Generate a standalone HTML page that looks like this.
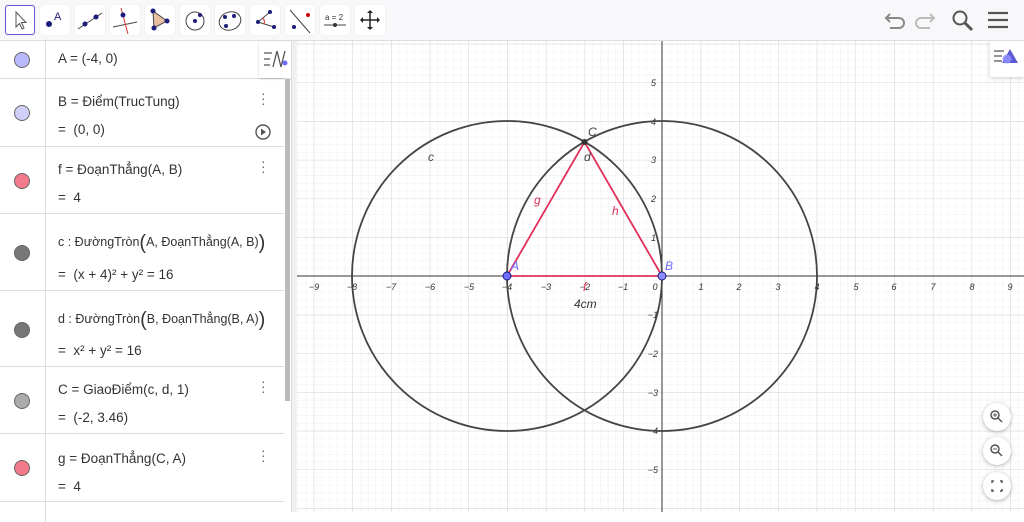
<!DOCTYPE html>
<html><head><meta charset="utf-8"><style>
body{margin:0;width:1024px;height:512px;overflow:hidden;background:#fff;font-family:"Liberation Sans","DejaVu Sans",sans-serif;position:relative}
.tb{position:absolute;left:0;top:0;width:1024px;height:40px;background:#f8f8fa;border-bottom:1px solid #ddd}
.tool{position:absolute;top:5px;width:30px;height:30px;background:#fff;border-radius:3px;box-shadow:0 0 1px #ccc}
.alg{position:absolute;left:0;top:41px;width:284px;height:471px;background:#fff}
.row{position:absolute;left:0;width:284px;border-bottom:1px solid #ddd;font-size:13.5px;color:#333}
.row .dot{position:absolute;left:14px;width:14px;height:14px;border-radius:50%;border:1px solid #666}
.row .col{position:absolute;left:45px;top:0;bottom:0;border-left:1px solid #ddd}
.row .t{position:absolute;left:58px;white-space:nowrap}
.menu{position:absolute;left:261px;font-size:14px;color:#666;line-height:5px;width:4px}
</style></head><body>
<div class="tb">
<div class="tool" style="left:5px;border:1.5px solid #6557d2;width:28px;height:28px"><svg width="28" height="28"><path d="M10 6 L10 21 L13.5 17.5 L16 23 L18 22 L15.5 16.5 L20 16.5 Z" fill="#fff" stroke="#555" stroke-width="1"/></svg></div>
<div class="tool" style="left:40px"><svg width="30" height="30"><circle cx="9" cy="19" r="3" fill="#1c1c7a"/><text x="14" y="15" font-size="11" fill="#1c1c7a">A</text></svg></div>
<div class="tool" style="left:75px"><svg width="30" height="30"><line x1="3" y1="24" x2="27" y2="8" stroke="#444"/><circle cx="10" cy="19" r="2.5" fill="#1c1c7a"/><circle cx="21" cy="12" r="2.5" fill="#1c1c7a"/></svg></div>
<div class="tool" style="left:110px"><svg width="30" height="30"><line x1="3" y1="22" x2="27" y2="17" stroke="#444"/><line x1="11" y1="3" x2="18" y2="29" stroke="#d33"/><circle cx="13" cy="10" r="2.5" fill="#1c1c7a"/></svg></div>
<div class="tool" style="left:145px"><svg width="30" height="30"><path d="M8 6 L9 23 L22 16Z" fill="#e8c0a0" stroke="#444"/><circle cx="8" cy="6" r="2.5" fill="#1c1c7a"/><circle cx="9" cy="23" r="2.5" fill="#1c1c7a"/><circle cx="22" cy="16" r="2.5" fill="#1c1c7a"/></svg></div>
<div class="tool" style="left:180px"><svg width="30" height="30"><circle cx="15" cy="16" r="9" fill="none" stroke="#444"/><circle cx="15" cy="16" r="2" fill="#1c1c7a"/><circle cx="20" cy="10" r="2" fill="#1c1c7a"/></svg></div>
<div class="tool" style="left:215px"><svg width="30" height="30"><ellipse cx="15" cy="16" rx="11" ry="9" fill="none" stroke="#444" transform="rotate(-20 15 16)"/><circle cx="10" cy="12" r="2" fill="#1c1c7a"/><circle cx="19" cy="11" r="2" fill="#1c1c7a"/><circle cx="11" cy="21" r="2" fill="#1c1c7a"/></svg></div>
<div class="tool" style="left:250px"><svg width="30" height="30"><path d="M20 7 L8 17 L24 22" fill="none" stroke="#444"/><path d="M13 13 A6 6 0 0 1 14 19" fill="#f5b0b0" stroke="#d33"/><circle cx="20" cy="7" r="2" fill="#1c1c7a"/><circle cx="8" cy="17" r="2" fill="#1c1c7a"/><circle cx="24" cy="22" r="2" fill="#1c1c7a"/></svg></div>
<div class="tool" style="left:285px"><svg width="30" height="30"><line x1="5" y1="5" x2="25" y2="28" stroke="#444"/><circle cx="23" cy="10" r="2" fill="#c00"/><circle cx="9" cy="22" r="2" fill="#1c1c7a"/></svg></div>
<div class="tool" style="left:320px"><svg width="30" height="30"><text x="5" y="15" font-size="8" fill="#333">a = 2</text><line x1="4" y1="20" x2="26" y2="20" stroke="#444"/><circle cx="15" cy="20" r="2" fill="#333"/></svg></div>
<div class="tool" style="left:355px"><svg width="30" height="30"><path d="M15 6 V24 M6 15 H24" stroke="#222" stroke-width="1.5"/><path d="M12 8 L15 5 L18 8Z M12 22 L15 25 L18 22Z M8 12 L5 15 L8 18Z M22 12 L25 15 L22 18Z" fill="#222"/></svg></div>
<svg style="position:absolute;left:880px;top:6px" width="144" height="30"><path d="M10 8 L6 12 L10 16 M6 12 H19 A5 5 0 0 1 19 22 H10" fill="none" stroke="#888" stroke-width="2"/><path d="M50 8 L54 12 L50 16 M54 12 H41 A5 5 0 0 0 41 22 H50" fill="none" stroke="#bbb" stroke-width="2"/><circle cx="80" cy="12" r="6.5" fill="none" stroke="#555" stroke-width="2"/><line x1="85" y1="17" x2="92" y2="24" stroke="#555" stroke-width="3"/><path d="M108 7 H128 M108 14 H128 M108 21 H128" stroke="#555" stroke-width="2.2"/></svg>
</div>

<svg style="position:absolute;left:0;top:41px" width="1024" height="471">
<defs>
<pattern id="mn" patternUnits="userSpaceOnUse" width="7.74" height="7.74" x="662" y="235"><path d="M0 0 H7.74 M0 0 V7.74" stroke="#efefef" stroke-width="1" fill="none"/></pattern>
<pattern id="mj" patternUnits="userSpaceOnUse" width="38.7" height="38.7" x="662" y="235"><path d="M0 0 H38.7 M0 0 V38.7" stroke="#d6d6d6" stroke-width="1" fill="none"/></pattern>
</defs>
<rect x="296" y="0" width="728" height="471" fill="url(#mn)"/>
<rect x="296" y="0" width="728" height="471" fill="url(#mj)"/>
<line x1="296" y1="235" x2="1024" y2="235" stroke="#333"/>
<line x1="662" y1="0" x2="662" y2="471" stroke="#333"/>
<g font-size="9" fill="#333" font-style="italic" text-anchor="middle">
<text x="314" y="249">−9</text><text x="352" y="249">−8</text><text x="391" y="249">−7</text><text x="430" y="249">−6</text><text x="469" y="249">−5</text><text x="507" y="249">−4</text><text x="546" y="249">−3</text><text x="585" y="249">−2</text><text x="623" y="249">−1</text><text x="655" y="249">0</text>
<text x="701" y="249">1</text><text x="739" y="249">2</text><text x="778" y="249">3</text><text x="817" y="249">4</text><text x="856" y="249">5</text><text x="894" y="249">6</text><text x="933" y="249">7</text><text x="972" y="249">8</text><text x="1010" y="249">9</text>
</g>
<g font-size="9" fill="#333" font-style="italic" text-anchor="end">
<text x="656" y="45">5</text><text x="656" y="84">4</text><text x="656" y="122">3</text><text x="656" y="161">2</text><text x="656" y="200">1</text>
<text x="658" y="277">−1</text><text x="658" y="316">−2</text><text x="658" y="355">−3</text><text x="658" y="393">−4</text><text x="658" y="432">−5</text>
</g>
<circle cx="507" cy="235" r="155" fill="none" stroke="#444" stroke-width="1.8"/>
<circle cx="662" cy="235" r="155" fill="none" stroke="#444" stroke-width="1.8"/>
<path d="M507 235 L662 235 L584.5 101 Z" fill="none" stroke="#e0305a" stroke-width="1.8"/>
<circle cx="584.5" cy="101" r="3" fill="#333"/>
<circle cx="507" cy="235" r="4" fill="#6d6dff" stroke="#1c1c7a"/>
<circle cx="662" cy="235" r="4" fill="#8d8dff" stroke="#1c1c7a"/>
<g font-size="12" font-style="italic">
<text x="588" y="95" fill="#444">C</text><text x="584" y="120" fill="#444">d</text><text x="428" y="120" fill="#444">c</text>
<text x="534" y="163" fill="#e0305a">g</text><text x="612" y="174" fill="#e0305a">h</text><text x="583" y="250" fill="#e0305a">f</text>
<text x="511" y="229" fill="#6d6dff">A</text><text x="665" y="229" fill="#6d6dff">B</text>
<text x="574" y="267" fill="#333">4cm</text>
</g>
<g fill="#fff" filter="drop-shadow(0 1px 2px rgba(0,0,0,.3))">
<circle cx="997" cy="376" r="14"/><circle cx="997" cy="410" r="14"/><circle cx="997" cy="445" r="14"/></g>
<g stroke="#555" stroke-width="1.5" fill="none">
<circle cx="995" cy="374" r="4"/><line x1="998" y1="377" x2="1002" y2="381"/><path d="M993 374 H997 M995 372 V376" stroke-width="1"/>
<circle cx="995" cy="408" r="4"/><line x1="998" y1="411" x2="1002" y2="415"/><path d="M993 408 H997" stroke-width="1"/>
<path d="M992 442 V440 H994 M1000 440 H1002 V442 M1002 448 V450 H1000 M994 450 H992 V448"/></g>
<rect x="990" y="0" width="34" height="36" fill="#fff" style="filter:drop-shadow(0 1px 2px rgba(0,0,0,.2))"/>
<path d="M994 10 H1004 M994 15 H1002 M994 20 H1002" stroke="#555" stroke-width="1.3"/>
<path d="M1010 8 L1018 22 H1002 Z" fill="#5b5bd6"/><circle cx="1007" cy="18" r="4.5" fill="#8d8dff" opacity=".9"/>
</svg>

<div class="alg">
<div class="row" style="top:0;height:37px"><div class="dot" style="top:11px;background:#b8b8fa"></div><div class="col"></div><div class="t" style="top:10px">A = (-4, 0)</div></div>
<div class="row" style="top:38px;height:67px"><div class="dot" style="top:26px;background:#cfcffa"></div><div class="col"></div><div class="t" style="top:15px">B = Điểm(TrucTung)</div><div class="t" style="top:43px">=&nbsp; (0, 0)</div><div class="menu" style="top:12px">·<br>·<br>·</div><svg style="position:absolute;left:254px;top:44px" width="18" height="18"><circle cx="9" cy="9" r="7" fill="none" stroke="#555" stroke-width="1.4"/><path d="M7 5.5 L12 9 L7 12.5Z" fill="#555"/></svg></div>
<div class="row" style="top:106px;height:66px"><div class="dot" style="top:26px;background:#f27a8a"></div><div class="col"></div><div class="t" style="top:15px">f = ĐoạnThẳng(A, B)</div><div class="t" style="top:43px">=&nbsp; 4</div><div class="menu" style="top:12px">·<br>·<br>·</div></div>
<div class="row" style="top:173px;height:76px"><div class="dot" style="top:31px;background:#777"></div><div class="col"></div><div class="t" style="top:18px;font-size:12.5px">c : ĐườngTròn<span style="font-size:20px;vertical-align:-3px">(</span>A, ĐoạnThẳng(A, B)<span style="font-size:20px;vertical-align:-3px">)</span></div><div class="t" style="top:53px">=&nbsp; (x + 4)² + y² = 16</div></div>
<div class="row" style="top:250px;height:75px"><div class="dot" style="top:31px;background:#777"></div><div class="col"></div><div class="t" style="top:18px;font-size:12.5px">d : ĐườngTròn<span style="font-size:20px;vertical-align:-3px">(</span>B, ĐoạnThẳng(B, A)<span style="font-size:20px;vertical-align:-3px">)</span></div><div class="t" style="top:52px">=&nbsp; x² + y² = 16</div></div>
<div class="row" style="top:326px;height:66px"><div class="dot" style="top:26px;background:#aaa"></div><div class="col"></div><div class="t" style="top:15px">C = GiaoĐiểm(c, d, 1)</div><div class="t" style="top:43px">=&nbsp; (-2, 3.46)</div><div class="menu" style="top:12px">·<br>·<br>·</div></div>
<div class="row" style="top:393px;height:67px"><div class="dot" style="top:26px;background:#f27a8a"></div><div class="col"></div><div class="t" style="top:17px">g = ĐoạnThẳng(C, A)</div><div class="t" style="top:45px">=&nbsp; 4</div><div class="menu" style="top:14px">·<br>·<br>·</div></div>
<div class="row" style="top:461px;height:20px;border:none"><div class="col"></div></div>
<div style="position:absolute;left:259px;top:0;width:32px;height:37px;background:#fff;box-shadow:0 1px 2px rgba(0,0,0,.2)"><svg width="32" height="37"><path d="M5 12 H13 M5 18 H11 M5 24 H11" stroke="#555" stroke-width="1.3"/><path d="M14 26 L18 10 L22 26 L26 10" fill="none" stroke="#555" stroke-width="1.3"/><circle cx="26" cy="22" r="2.5" fill="#6d6dff"/></svg></div>
<div style="position:absolute;left:285px;top:38px;width:5px;height:322px;background:#bbb"></div>
</div>
<div style="position:absolute;left:291px;top:41px;width:5px;height:471px;background:#f0f0f0;border-left:1px solid #ddd"></div>
</body></html>
